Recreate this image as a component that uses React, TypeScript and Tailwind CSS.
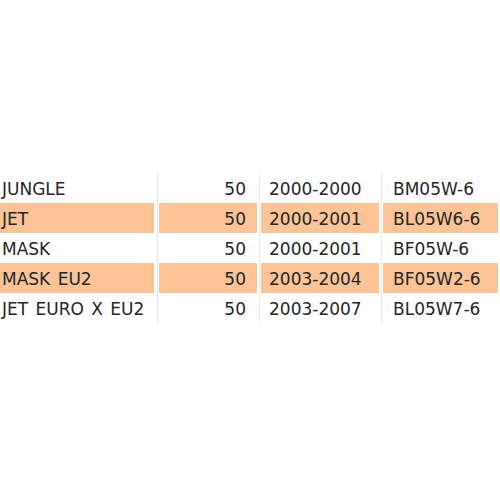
import React from "react";

const rows = [
  { name: "JUNGLE", cc: "50", years: "2000-2000", code: "BM05W-6", hl: false },
  { name: "JET", cc: "50", years: "2000-2001", code: "BL05W6-6", hl: true },
  { name: "MASK", cc: "50", years: "2000-2001", code: "BF05W-6", hl: false },
  { name: "MASK EU2", cc: "50", years: "2003-2004", code: "BF05W2-6", hl: true },
  { name: "JET EURO X EU2", cc: "50", years: "2003-2007", code: "BL05W7-6", hl: false },
];

export default function App() {
  return (
    <div
      className="w-[500px] h-[500px] bg-white pt-[173px] text-[#262626] text-[17px] leading-[20px]"
      style={{ fontFamily: '"DejaVu Sans", Verdana, sans-serif' }}
    >
      {rows.map((r) => {
        const bg = r.hl ? "bg-[#fbc396]" : "bg-white";
        return (
          <div key={r.name} className="flex h-[30px]">
            <div className="w-[157px] pr-[3px] h-full">
              <div className={`${bg} h-full pl-[2px] pt-[6px] whitespace-nowrap [word-spacing:2px]`}>{r.name}</div>
            </div>
            <div className="w-[102px] border-l border-[#e8e8e8] pl-[1px] pr-[2px] h-full">
              <div className={`${bg} h-full pr-[11px] pt-[6px] text-right`}>{r.cc}</div>
            </div>
            <div className="w-[122px] border-l border-[#e8e8e8] pl-[1px] pr-[2px] h-full">
              <div className={`${bg} h-full pl-[8px] pt-[6px]`}>{r.years}</div>
            </div>
            <div className="w-[119px] border-l border-[#e8e8e8] pl-[1px] pr-[2px] h-full">
              <div className={`${bg} h-full pl-[10px] pt-[6px]`}>{r.code}</div>
            </div>
          </div>
        );
      })}
    </div>
  );
}
